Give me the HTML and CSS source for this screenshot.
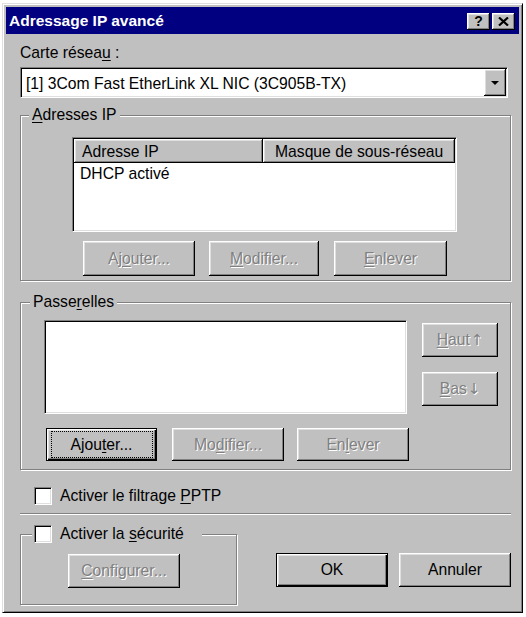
FILE: index.html
```html
<!DOCTYPE html>
<html lang="fr">
<head>
<meta charset="utf-8">
<title>Adressage IP avancé</title>
<link rel="stylesheet" href="styles.css">
</head>
<body>
<div class="dialog">
  <div class="titlebar">
    <span class="title">Adressage IP avancé</span>
    <div class="tbtns">
      <span class="tbtn help">?</span>
      <span class="tbtn close"><svg width="11" height="9" viewBox="0 0 11 9"><path d="M1 0.5 L10 8.5 M10 0.5 L1 8.5" stroke="#000" stroke-width="2.2" fill="none"/></svg></span>
    </div>
  </div>
  <div class="content">
    <div class="label">Carte résea<u>u</u> :</div>
    <div class="combo sunken">
      <span class="combo-text">[1] 3Com Fast EtherLink XL NIC (3C905B-TX)</span>
      <span class="combo-btn raised"><span class="arrow"></span></span>
    </div>

    <fieldset class="group g-ip">
      <legend><u>A</u>dresses IP</legend>
      <div class="listview sunken">
        <div class="lv-head">
          <div class="lv-col c1 raised">Adresse IP</div>
          <div class="lv-col c2 raised">Masque de sous-réseau</div>
        </div>
        <div class="lv-row">DHCP activé</div>
      </div>
      <div class="btnrow r1">
        <div class="btn raised disabled w112">Aj<u>o</u>uter...</div>
        <div class="btn raised disabled w110 gap14"><u>M</u>odifier...</div>
        <div class="btn raised disabled w113 gap15"><u>E</u>nlever</div>
      </div>
    </fieldset>

    <fieldset class="group g-gw">
      <legend>Passe<u>r</u>elles</legend>
      <div class="gw-main">
        <div class="listbox sunken"></div>
        <div class="side">
          <div class="btn raised disabled sbtn"><u>H</u>aut<span class="arr">↑</span></div>
          <div class="btn raised disabled sbtn"><u>B</u>as<span class="arr">↓</span></div>
        </div>
      </div>
      <div class="btnrow r2">
        <div class="btn default focus w111">Ajou<u>t</u>er...</div>
        <div class="btn raised disabled w112 gap15">Mo<u>d</u>ifier...</div>
        <div class="btn raised disabled w112 gap13">En<u>l</u>ever</div>
      </div>
    </fieldset>

    <div class="checkrow pptp">
      <span class="checkbox sunken"></span>
      <span class="clabel">Activer le filtrage <u>P</u>PTP</span>
    </div>

    <div class="separator"></div>

    <div class="bottom">
      <fieldset class="group g-sec">
        <legend><span class="legend-check"><span class="checkbox sunken"></span><span class="clabel">Activer la <u>s</u>écurité</span></span></legend>
        <div class="btn raised disabled cfg"><u>C</u>onfigurer...</div>
      </fieldset>
      <div class="actions">
        <div class="btn default w112">OK</div>
        <div class="btn raised w112 gap11">Annuler</div>
      </div>
    </div>
  </div>
</div>
</body>
</html>
```
FILE: styles.css
```css
* { box-sizing: border-box; }
html, body { margin: 0; padding: 0; background: #fff; }
body {
  font-family: "Liberation Sans", Arial, sans-serif;
  font-size: 15.7px;
  color: #000;
}
u { text-decoration: underline; text-underline-offset: 2px; }

.dialog {
  margin: 3px 0 0 2px;
  width: 521px;
  background: #c0c0c0;
  border: 1px solid;
  border-color: #dfdfdf #000 #000 #dfdfdf;
  box-shadow: inset 1px 1px 0 #fff, inset -1px -1px 0 #808080;
  padding: 3px;
}

.raised {
  background: #c0c0c0;
  box-shadow: inset -1px -1px 0 #000, inset 1px 1px 0 #fff, inset -2px -2px 0 #808080, inset 2px 2px 0 #dfdfdf;
}
.sunken {
  border: 1px solid;
  border-color: #808080 #fff #fff #808080;
  box-shadow: inset 1px 1px 0 #000, inset -1px -1px 0 #dfdfdf;
  background: #fff;
}

/* title bar */
.titlebar {
  height: 27px;
  background: #000080;
  display: flex;
  align-items: center;
  justify-content: space-between;
  padding: 0 4px 0 3px;
}
.title {
  color: #fff;
  font-weight: bold;
  font-size: 15.5px;
  white-space: nowrap;
}
.tbtns { display: flex; gap: 2px; margin-top: 1px; }
.tbtn {
  width: 23px;
  height: 17px;
  display: flex;
  align-items: center;
  justify-content: center;
  background: #c0c0c0;
  box-shadow: inset -1px -1px 0 #000, inset 1px 1px 0 #fff, inset -2px -2px 0 #808080, inset 2px 2px 0 #dfdfdf;
}
.tbtn.help {
  font-weight: bold;
  font-size: 14px;
  line-height: 1;
  padding-bottom: 1px;
}

/* content */
.content { padding: 10px 0 4px 14px; }
.label { line-height: 18px; height: 18px; }

.combo {
  margin-top: 5px;
  width: 488px;
  height: 31px;
  display: flex;
  align-items: center;
  padding: 1px;
}
.combo-text { padding: 2px 0 0 4px; line-height: 18px; white-space: nowrap; }
.combo-btn {
  margin-left: auto;
  width: 22px;
  height: 27px;
  display: flex;
  align-items: center;
  justify-content: center;
}
.arrow {
  width: 0; height: 0;
  border-left: 4px solid transparent;
  border-right: 4px solid transparent;
  border-top: 4px solid #000;
  margin-top: 1px;
}

/* group boxes */
.group {
  margin: 0;
  min-width: 0;
  border: 1px solid #808080;
  box-shadow: 1px 1px 0 #fff, inset 1px 1px 0 #fff;
  padding: 0;
}
.group legend {
  padding: 0 3px;
  line-height: 16px;
  background: #c0c0c0;
}
.g-ip { margin-top: 9px; width: 491px; padding: 14px 0 4px 0; }
.g-ip legend { margin-left: 8px; }
.g-gw { margin-top: 13px; width: 491px; padding: 10px 0 8px 0; }
.g-gw legend { margin-left: 9px; }

/* list view */
.listview {
  margin-left: 51px;
  width: 385px;
  height: 95px;
  padding: 1px;
}
.lv-head { display: flex; height: 24px; }
.lv-col { line-height: 18px; padding-top: 4px; white-space: nowrap; }
.c1 { width: 189px; padding-left: 8px; }
.c2 { flex: 1; padding-left: 12px; }
.lv-row { padding: 2px 6px; line-height: 18px; }

/* buttons */
.btnrow { display: flex; }
.r1 { margin-top: 9px; padding-left: 62px; }
.r1 .btn { height: 35px; }
.r2 { margin-top: 14px; padding-left: 25px; }
.r2 .btn { height: 33px; }
.btn {
  position: relative;
  display: flex;
  align-items: center;
  justify-content: center;
  height: 34px;
  line-height: 18px;
  white-space: nowrap;
  background: #c0c0c0;
}
.btn.disabled { color: #808080; text-shadow: 1px 1px 0 #fff; }
.btn.default {
  box-shadow: inset 0 0 0 1px #000, inset 2px 2px 0 #fff, inset -2px -2px 0 #000, inset -3px -3px 0 #808080, inset 3px 3px 0 #dfdfdf;
}
.btn.focus::after {
  content: "";
  position: absolute;
  top: 3px; bottom: 3px; left: 5px; right: 4px;
  border: 1px dotted #000;
}
.arr { font-family: "DejaVu Sans", sans-serif; font-size: 15px; margin-left: 1px; }
.w110 { width: 110px; }
.w111 { width: 111px; }
.w112 { width: 112px; }
.w113 { width: 113px; }
.gap11 { margin-left: 11px; }
.gap13 { margin-left: 13px; }
.gap14 { margin-left: 14px; }
.gap15 { margin-left: 15px; }

/* gateways */
.gw-main { display: flex; align-items: flex-start; }
.listbox { margin-left: 23px; width: 363px; height: 94px; }
.side {
  margin-left: 15px;
  padding-top: 3px;
  display: flex;
  flex-direction: column;
  gap: 15px;
}
.sbtn { width: 76px; height: 34px; }

/* checkboxes */
.checkbox {
  display: inline-block;
  width: 18px;
  height: 18px;
  flex: none;
}
.checkrow { display: flex; align-items: center; height: 18px; }
.pptp { margin-top: 17px; padding-left: 14px; }
.clabel { margin-left: 8px; line-height: 18px; white-space: nowrap; }

.separator {
  margin-top: 8px;
  width: 491px;
  height: 2px;
  border-top: 1px solid #808080;
  border-bottom: 1px solid #fff;
}

/* bottom */
.bottom { display: flex; align-items: flex-start; }
.g-sec { margin-top: 10px; width: 217px; padding: 11px 0 16px 0; }
.g-sec legend { margin-left: 11px; padding: 0 18px 0 2px; line-height: 18px; }
.legend-check { display: flex; align-items: center; height: 18px; }
.cfg { margin-left: 47px; width: 112px; height: 34px; }
.actions { display: flex; margin-left: 39px; padding-top: 38px; }
```
